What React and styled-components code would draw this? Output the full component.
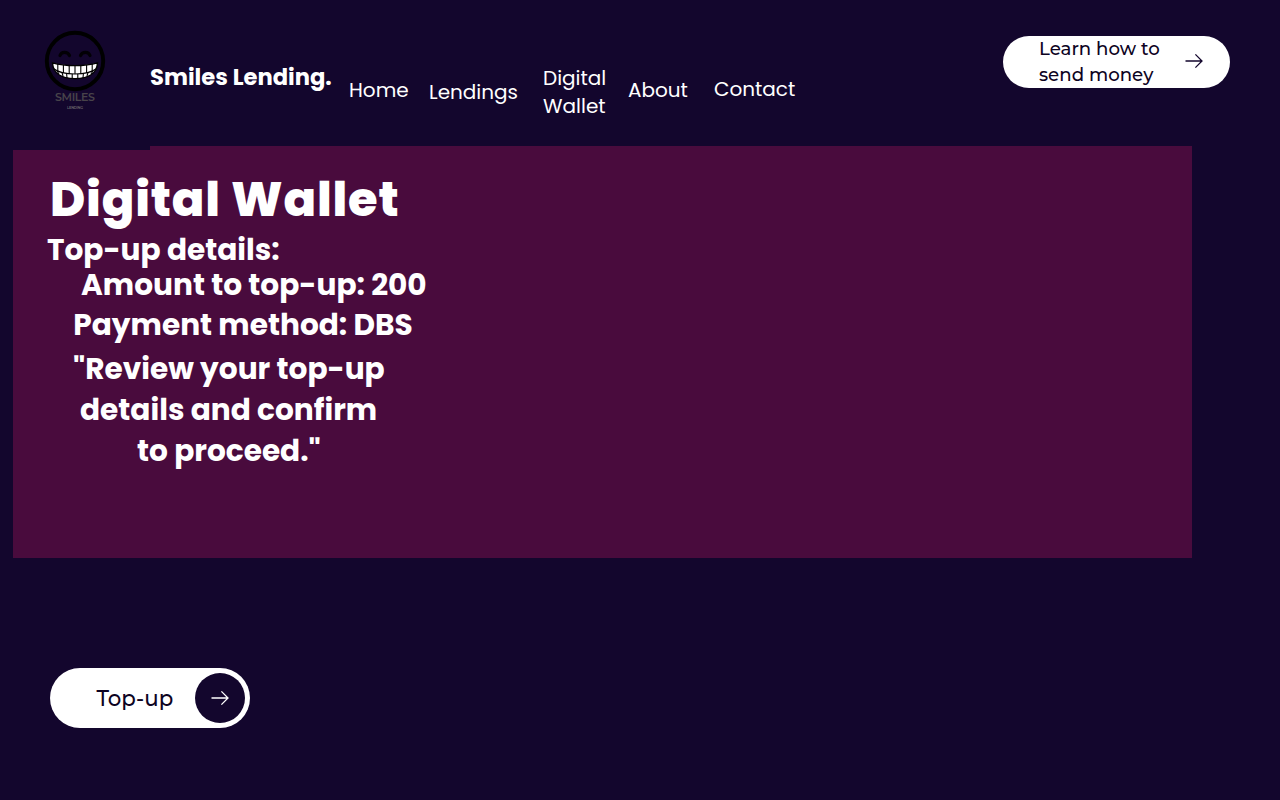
import React from "react";
import styled, { createGlobalStyle } from "styled-components";

const navy = "#13062d";
const plum = "#490b3d";

const GlobalStyle = createGlobalStyle`
  * { box-sizing: border-box; }
  body {
    margin: 0;
    background: ${navy};
    color: #fff;
    font-family: Poppins, Inter, "Open Sans", sans-serif;
  }
`;

const Page = styled.div`
  height: 800px;
  overflow: hidden;
  background: ${navy};
`;

const Header = styled.header`
  display: flex;
  align-items: flex-start;
  height: 145.5px;
`;

const LogoBox = styled.div`
  position: relative;
  z-index: 1;
  flex: none;
  width: 150px;
  height: 150px;
  background: ${navy};

  svg { display: block; }
`;

const Brand = styled.div`
  flex: none;
  width: 199px;
  padding-top: 61px;
  font-size: 22.65px;
  font-weight: 700;
  line-height: 33px;
  white-space: nowrap;
`;

const Nav = styled.nav`
  display: flex;
  align-items: flex-start;
  flex: 1;
`;

const NavLink = styled.a`
  flex: none;
  width: ${(p) => p.$width}px;
  margin-top: ${(p) => p.$top}px;
  font-size: 20px;
  font-weight: 400;
  line-height: 28px;
`;

const HelpButton = styled.button`
  display: flex;
  align-items: center;
  justify-content: space-between;
  width: 227px;
  height: 52px;
  margin: 36px 50px 0 0;
  padding: 0 27.5px 0 36px;
  border: 0;
  border-radius: 26px;
  background: #fff;
  color: #0d0322;
  font: 500 18.2px/26px Montserrat, Inter, sans-serif;
  text-align: left;

  svg { margin-top: -2px; }
`;

const ButtonLine = styled.span`
  display: block;
  white-space: nowrap;
`;

const Panel = styled.main`
  width: 1179.4px;
  height: 412.5px;
  margin-left: 13px;
  padding: 22.5px 0 0 33px;
  background: ${plum};
`;

const Title = styled.h1`
  margin: 0 0 0 4px;
  height: 62px;
  font-size: 48px;
  font-weight: 800;
  line-height: 64px;
  letter-spacing: 0.83px;
  white-space: nowrap;
`;

const Detail = styled.p`
  margin: 0;
  padding-left: ${(p) => p.$indent}px;
  height: ${(p) => p.$height}px;
  font-size: 29.6px;
  font-weight: 700;
  line-height: 40px;
  white-space: nowrap;
`;

const TopUpButton = styled.button`
  display: flex;
  align-items: center;
  justify-content: space-between;
  width: 200px;
  height: 60px;
  margin: 110px 0 0 50px;
  padding: 0 5px 0 46.5px;
  border: 0;
  border-radius: 30px;
  background: #fff;
  color: #0d0322;
  font: 500 21.3px/30px Montserrat, Inter, sans-serif;
`;

const ArrowDisc = styled.span`
  display: grid;
  place-items: center;
  width: 50px;
  height: 50px;
  border-radius: 50%;
  background: ${navy};
`;

function Arrow({ color }) {
  return (
    <svg width="18" height="16" viewBox="0 0 18 16" fill="none" stroke={color} strokeWidth="1.3">
      <path d="M0.5 8H17M10.4 1.4L17 8L10.4 14.6" />
    </svg>
  );
}

function Logo() {
  return (
    <svg width="150" height="150" viewBox="0 0 150 150">
      <circle cx="75" cy="61" r="28.2" fill="none" stroke="#000" strokeWidth="3.9" />
      <g fill="none" stroke="#020005" strokeWidth="3.2" strokeLinecap="round">
        <path d="M60 55.5C61.5 51.2 67.5 51.2 69.5 55.5" />
        <path d="M80.5 55.5C82.5 51.2 88.5 51.2 90 55.5" />
      </g>
      <path
        d="M52.5 62.8C65 66.5 85 66.5 97.5 62.8C97 73.5 88 78.6 75 78.6C62 78.6 53 73.5 52.5 62.8Z"
        fill="#fff"
        stroke="#000"
        strokeWidth="1.4"
      />
      <path
        d="M53.8 68.8C59 73 67 74 75 74C83 74 91 73 96.2 68.8"
        fill="none"
        stroke="#000"
        strokeWidth="1.1"
      />
      <path
        d="M57.8 64V71M63.4 65V73M69.2 65.5V74M75 65.5V74M80.8 65.5V74M86.6 65V73M92.2 64V71M57 71L59 74M62 72.5L63 76M66.6 73.5L67 78M72.2 74V78.5M77.8 74V78.5M83.4 73.5L83 78M88 72.5L87 76M93 71L91 74"
        fill="none"
        stroke="#000"
        strokeWidth="1.1"
      />
      <text x="55" y="101.2" fontFamily="Montserrat, Inter, sans-serif" fontSize="11" fontWeight="600" textLength="40" fill="#48434a">
        SMILES
      </text>
      <text x="67" y="108.8" fontFamily="Montserrat, Inter, sans-serif" fontSize="3.6" fontWeight="600" textLength="16" fill="#68636a">
        LENDING
      </text>
    </svg>
  );
}

export default function App() {
  return (
    <Page>
      <GlobalStyle />
      <Header>
        <LogoBox><Logo /></LogoBox>
        <Brand>Smiles Lending.</Brand>
        <Nav>
          <NavLink $width={80} $top={76}>Home</NavLink>
          <NavLink $width={114} $top={78}>Lendings</NavLink>
          <NavLink $width={85} $top={64}>Digital<br />Wallet</NavLink>
          <NavLink $width={86} $top={76}>About</NavLink>
          <NavLink $width={90} $top={75}>Contact</NavLink>
        </Nav>
        <HelpButton>
          <span>
            <ButtonLine>Learn how to</ButtonLine>
            <ButtonLine>send money</ButtonLine>
          </span>
          <Arrow color={navy} />
        </HelpButton>
      </Header>
      <Panel>
        <Title>Digital Wallet</Title>
        <Detail $indent={1} $height={35}>Top-up details:</Detail>
        <Detail $indent={35} $height={40}>Amount to top-up: 200</Detail>
        <Detail $indent={27.3} $height={44}>Payment method: DBS</Detail>
        <Detail $indent={27} $height={41}>"Review your top-up</Detail>
        <Detail $indent={34} $height={41}>details and confirm</Detail>
        <Detail $indent={91} $height={41}>to proceed."</Detail>
      </Panel>
      <TopUpButton>
        <ButtonLine>Top-up</ButtonLine>
        <ArrowDisc><Arrow color="#fff" /></ArrowDisc>
      </TopUpButton>
    </Page>
  );
}
